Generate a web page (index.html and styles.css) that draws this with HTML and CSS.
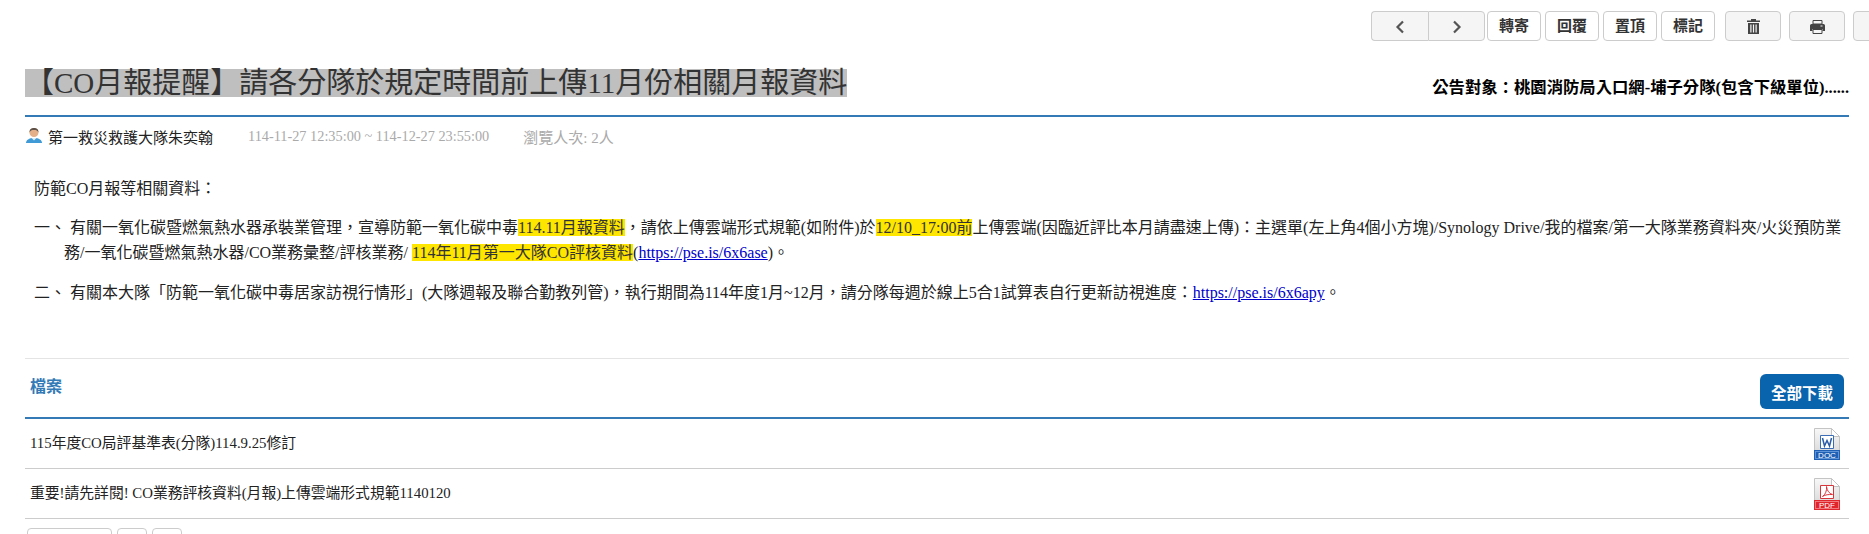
FILE: index.html
```html
<!DOCTYPE html>
<html lang="zh-Hant">
<head>
    <meta charset="UTF-8">
    <title>公告內容</title>
    <link rel="stylesheet" href="styles.css">
</head>
<body>
    <div class="page">
        <div class="toolbar">
            <div class="btn-group">
                <button class="btn btn-nav"><svg width="12" height="14" viewBox="0 0 12 14"><path d="M9 1.500 3.500 7 9 12.500" fill="none" stroke="#555" stroke-width="2.200"/></svg></button>
                <button class="btn btn-nav"><svg width="12" height="14" viewBox="0 0 12 14"><path d="M3 1.500 8.500 7 3 12.500" fill="none" stroke="#555" stroke-width="2.200"/></svg></button>
            </div>
            <button class="btn btn-text">轉寄</button>
            <button class="btn btn-text">回覆</button>
            <button class="btn btn-text">置頂</button>
            <button class="btn btn-text btn-last">標記</button>
            <button class="btn btn-icon"><svg width="13" height="15" viewBox="0 0 13 15"><path d="M0 1.500h13v1.500H0zM4 0h5v1.500H4z" fill="#444"/><path d="M1 4h11v11H1z" fill="#444"/><path d="M3.300 5.500h1.200v8H3.300zM5.900 5.500h1.200v8H5.900zM8.500 5.500h1.200v8H8.500z" fill="#f5f5f5"/></svg></button>
            <button class="btn btn-icon"><svg width="15" height="14" viewBox="0 0 15 14"><path d="M3 .5h9v3.500H3z" fill="none" stroke="#444"/><path d="M1.500 4h12a1.500 1.500 0 0 1 1.500 1.500V11h-2.500V9h-10v2H0V5.500A1.500 1.500 0 0 1 1.500 4z" fill="#444"/><path d="M3 9.500h9v4H3z" fill="none" stroke="#444"/><path d="M10.500 5.500h2v1h-2z" fill="#f5f5f5"/></svg></button>
            <button class="btn btn-icon"></button>
        </div>

        <div class="title-row">
            <h1 class="title"><span class="title-mark">【CO月報提醒】請各分隊於規定時間前上傳11月份相關月報資料</span></h1>
            <div class="target">公告對象：桃園消防局入口網-埔子分隊(包含下級單位)......</div>
        </div>

        <div class="meta">
            <svg class="user-icon" width="18" height="18" viewBox="0 0 18 18">
                <path d="M1 16c0-3 3-5 8-5s8 2 8 5z" fill="#3f9ad6"/>
                <path d="M6.500 11h5L9 13.500z" fill="#dff0fa"/>
                <circle cx="9" cy="5.500" r="4.500" fill="#e3b08a"/>
                <path d="M4.500 5.500C4.500 2 6.500 1 9 1s4.500 1 4.500 4.500c-1-2-2-2.500-4.500-2.500S5.500 3.500 4.500 5.500z" fill="#5d5148"/>
            </svg>
            <span class="author">第一救災救護大隊朱奕翰</span>
            <span class="date">114-11-27 12:35:00 ~ 114-12-27 23:55:00</span>
            <span class="views">瀏覽人次: 2人</span>
        </div>

        <div class="content">
            <p class="lead">防範CO月報等相關資料：</p>
            <p class="item">一、 有關一氧化碳暨燃氣熱水器承裝業管理，宣導防範一氧化碳中毒<mark>114.11月報資料</mark>，請依上傳雲端形式規範(如附件)於<mark>12/10_17:00前</mark>上傳雲端(因臨近評比本月請盡速上傳)：主選單(左上角4個小方塊)/Synology Drive/我的檔案/第一大隊業務資料夾/火災預防業務/一氧化碳暨燃氣熱水器/CO業務彙整/評核業務/ <mark>114年11月第一大隊CO評核資料</mark>(<a href="#">https://pse.is/6x6ase</a>)。</p>
            <p class="item">二、 有關本大隊「防範一氧化碳中毒居家訪視行情形」(大隊週報及聯合勤教列管)，執行期間為114年度1月~12月，請分隊每週於線上5合1試算表自行更新訪視進度：<a href="#">https://pse.is/6x6apy</a>。</p>
        </div>

        <div class="files-head">
            <span class="files-title">檔案</span>
            <button class="btn-download">全部下載</button>
        </div>
        <div class="file-row">
            <span class="file-name">115年度CO局評基準表(分隊)114.9.25修訂</span>
            <svg class="file-icon" width="26" height="32" viewBox="0 0 26 32">
                <defs>
                    <linearGradient id="page-fill" x1="0" y1="0" x2="0" y2="1">
                        <stop offset="0" stop-color="#f8f8f8"/>
                        <stop offset="1" stop-color="#dcdcdc"/>
                    </linearGradient>
                </defs>
                <path d="M.5.5h17l8 8v15H.5z" fill="url(#page-fill)" stroke="#c4c4c4"/>
                <path d="M17.500.5v8h8z" fill="#fff" stroke="#c4c4c4"/>
                <path d="M6.500 7.500h13v13h-13z" fill="#fff" stroke="#3a6db5"/>
                <path d="M8.500 10l2 8 2.500-5.500 2.500 5.500 2-8" fill="none" stroke="#2a5ca8" stroke-width="1.500"/>
                <rect y="22" width="26" height="10" fill="#1f5fb4"/>
                <rect x="1.500" y="23.500" width="23" height="7" fill="none" stroke="#5f94d8"/>
                <text class="file-ext" x="13" y="30.300">DOC</text>
            </svg>
        </div>
        <div class="file-row">
            <span class="file-name">重要!請先詳閱! CO業務評核資料(月報)上傳雲端形式規範1140120</span>
            <svg class="file-icon" width="26" height="32" viewBox="0 0 26 32">
                <path d="M.5.5h17l8 8v15H.5z" fill="url(#page-fill)" stroke="#c4c4c4"/>
                <path d="M17.500.5v8h8z" fill="#fff" stroke="#c4c4c4"/>
                <path d="M6.500 7.500h13v13h-13z" fill="#fff" stroke="#d9343a"/>
                <path d="M8.500 18.500c3-2 4.500-6 4-10 .5 4 2.500 7 6 8-4 0-7 0-10 2z" fill="none" stroke="#d9343a"/>
                <rect y="22" width="26" height="10" fill="#e0262c"/>
                <rect x="1.500" y="23.500" width="23" height="7" fill="none" stroke="#f07a7e"/>
                <text class="file-ext" x="13" y="30.300">PDF</text>
            </svg>
        </div>

        <div class="footer-btns">
            <button class="btn btn-foot-wide"></button>
            <button class="btn btn-foot"></button>
            <button class="btn btn-foot"></button>
        </div>
    </div>
</body>
</html>
```

FILE: styles.css
```css
html, body {
    margin: 0;
    padding: 0;
    height: 534px;
    overflow: hidden;
    background-color: #fff;
}

body {
    font-family: "Liberation Serif", "Noto Sans CJK TC", serif;
    font-size: 15px;
    color: #333;
}

.page {
    padding: 11px 20px 0 25px;
}

/* toolbar */
.toolbar {
    display: flex;
    justify-content: flex-end;
    margin-right: -60px;
    height: 30px;
}

.btn {
    box-sizing: border-box;
    padding: 0;
    border: 1px solid #ccc;
    border-radius: 4px;
    background-color: #fff;
    font-family: inherit;
    font-size: 15px;
    color: #333;
}

.btn svg {
    display: block;
    margin: 1px auto 0;
}

.btn-group {
    display: flex;
    margin-right: 2px;
}

.btn-nav {
    width: 57px;
    height: 30px;
    background-color: #f5f5f5;
    border-radius: 0;
}

.btn-nav:first-child {
    border-radius: 4px 0 0 4px;
    border-right: 0;
}

.btn-nav:last-child {
    border-radius: 0 4px 4px 0;
}

.btn-text {
    width: 54px;
    height: 30px;
    margin-right: 4px;
    padding-bottom: 4px;
    font-weight: bold;
}

.btn-last {
    margin-right: 10px;
}

.btn-icon {
    width: 56px;
    height: 30px;
    margin-right: 8px;
    background-color: #f5f5f5;
}

.btn-icon:last-child {
    margin-right: 0;
}

/* title */
.title-row {
    display: flex;
    justify-content: space-between;
    align-items: center;
    margin-top: 28px;
    height: 28px;
    padding-bottom: 18px;
    border-bottom: 2px solid #337ab7;
}

.title {
    margin: 0;
    font-size: 29px;
    font-weight: normal;
    line-height: 28px;
    white-space: nowrap;
}

.title-mark {
    display: inline-block;
    height: 28px;
    background-color: #bfbfbf;
}

.target {
    margin-top: 6px;
    font-size: 16.35px;
    font-weight: bold;
    color: #000;
    white-space: nowrap;
}

/* author line */
.meta {
    display: flex;
    align-items: center;
    height: 20px;
    margin-top: 9px;
    font-size: 15px;
}

.user-icon {
    margin-right: 5px;
}

.author {
    color: #222;
    margin-right: 35px;
}

.date {
    font-size: 14.3px;
    color: #aaa;
    margin-right: 34px;
}

.views {
    font-size: 15px;
    color: #aaa;
}

/* announcement body */
.content {
    margin-top: 30px;
    padding-left: 9px;
    font-size: 16px;
    line-height: 25px;
    color: #222;
}

.content p {
    margin: 0 0 15px;
}

.content .lead {
    margin-bottom: 14px;
}

.item {
    padding-left: 30px;
    text-indent: -30px;
}

mark {
    background-color: #ffe600;
    color: #333;
}

a {
    color: #0000cc;
}

/* attachments */
.files-head {
    display: flex;
    justify-content: space-between;
    align-items: center;
    margin-top: 53px;
    height: 58px;
    padding: 0 5px;
    border-top: 1px solid #e4e4e4;
    border-bottom: 2px solid #337ab7;
}

.files-title {
    padding-bottom: 7px;
    font-size: 16px;
    font-weight: bold;
    color: #337ab7;
}

.btn-download {
    width: 84px;
    height: 35px;
    margin-top: 7px;
    padding: 0;
    border: 0;
    border-radius: 6px;
    background-color: #0a63ad;
    color: #fff;
    font-family: inherit;
    font-size: 15.5px;
    font-weight: bold;
}

.file-row {
    display: flex;
    justify-content: space-between;
    align-items: center;
    height: 49px;
    padding: 0 9px 0 5px;
    border-bottom: 1px solid #ccc;
    font-size: 14.8px;
    color: #222;
}

.file-name {
    padding-bottom: 4px;
}

.file-ext {
    font-family: "Liberation Sans", sans-serif;
    font-size: 8px;
    fill: #fff;
    text-anchor: middle;
}

.footer-btns {
    display: flex;
    gap: 5px;
    margin: 9px 0 0 2px;
}

.btn-foot-wide {
    width: 85px;
    height: 30px;
}

.btn-foot {
    width: 30px;
    height: 30px;
}
```
